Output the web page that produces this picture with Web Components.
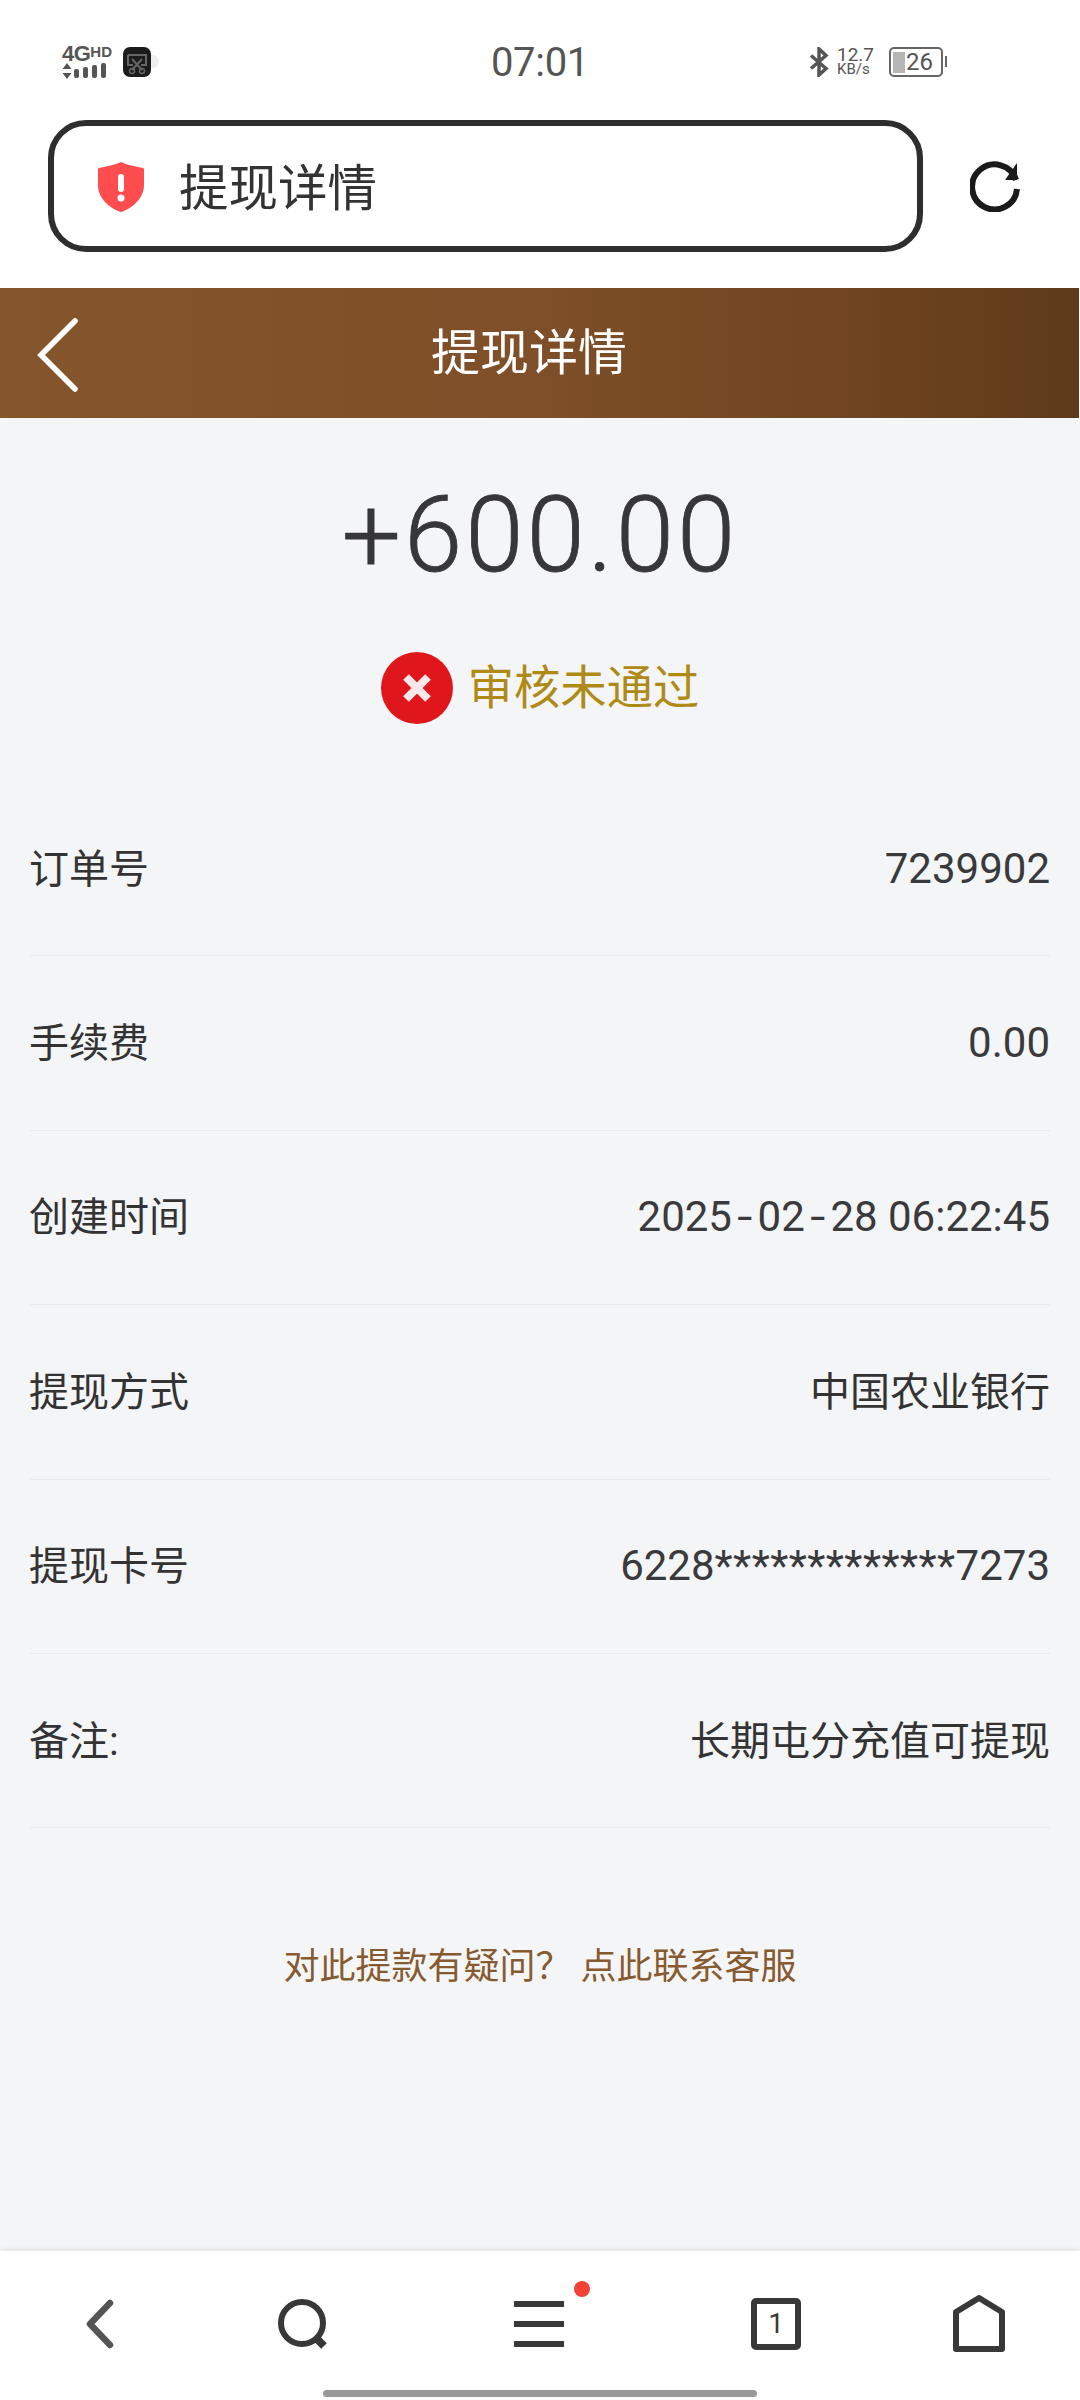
<!DOCTYPE html>
<html lang="zh">
<head>
<meta charset="utf-8">
<title>提现详情</title>
<style>
  html, body { margin: 0; padding: 0; }
  body {
    width: 1080px;
    height: 2400px;
    display: flex;
    flex-direction: column;
    overflow: hidden;
    background: #fff;
    font-family: Roboto, "Noto Sans CJK SC", sans-serif;
  }
  detail-page { flex: 1; }
</style>
</head>
<body>
  <status-bar></status-bar>
  <address-bar title="提现详情"></address-bar>
  <page-header title="提现详情"></page-header>
  <detail-page>
    <amount-summary amount="+600.00" status="审核未通过"></amount-summary>
    <detail-row label="订单号" value="7239902"></detail-row>
    <detail-row label="手续费" value="0.00"></detail-row>
    <detail-row label="创建时间" value="2025-02-28 06:22:45"></detail-row>
    <detail-row label="提现方式" value="中国农业银行"></detail-row>
    <detail-row label="提现卡号" value="6228*************7273"></detail-row>
    <detail-row label="备注:" value="长期屯分充值可提现"></detail-row>
    <contact-link>对此提款有疑问？ 点此联系客服</contact-link>
  </detail-page>
  <bottom-nav></bottom-nav>

<script>
// Status bar
class StatusBar extends HTMLElement {
  constructor() {
    super();
    this.attachShadow({ mode: 'open' });
  }

  connectedCallback() {
    this.shadowRoot.innerHTML = `
      <style>
        :host { display: grid; grid-template-columns: 1fr auto 1fr; align-items: center; height: 120px; padding: 4px 62px 0 62px; box-sizing: border-box; color: #555; background: #fff; }
        .left { display: flex; align-items: center; gap: 13px; }
        .signal { display: flex; flex-direction: column; width: 48px; gap: 1px; }
        .net { display: flex; align-items: flex-start; height: 17px; font: 700 22px/17px "Liberation Sans", sans-serif; letter-spacing: -0.5px; }
        .net small { font-size: 15px; line-height: 13px; letter-spacing: 0; }
        .app { position: relative; width: 28px; height: 30px; }
        .app::after { content: ""; position: absolute; left: 22px; top: 8px; width: 14px; height: 13px; border-radius: 50%; background: #eee; z-index: 0; }
        .app svg { position: relative; z-index: 1; display: block; }
        .time { font-size: 40px; line-height: 44px; letter-spacing: -0.3px; margin-top: 2px; }
        .right { display: flex; align-items: center; justify-content: flex-end; gap: 8px; padding-right: 75px; }
        .speed { display: flex; flex-direction: column; width: 36px; margin-right: 8px; font-size: 19px; line-height: 15px; }
        .speed small { font-size: 15px; white-space: nowrap; }
        .battery { display: flex; align-items: center; position: relative; width: 54px; height: 30px; box-sizing: border-box; border: 2.5px solid #666; border-radius: 5px; padding: 2px; font-size: 24px; color: #555; }
        .battery i { width: 12px; height: 21px; background: #b5b5b5; margin-right: 1px; }
        .battery::after { content: ""; position: absolute; right: -6px; top: 7px; width: 2px; height: 11px; background: #666; }
      </style>
      <div class="left">
        <div class="signal">
          <div class="net">4G<small>HD</small></div>
          <svg width="46" height="16" viewBox="0 0 46 16" fill="#555">
            <path d="M5 0l4.500 6h-9zM5 16l4.500-6h-9z"/>
            <rect x="12" y="6" width="5" height="9" rx="2"/>
            <rect x="21" y="4" width="5" height="11" rx="2"/>
            <rect x="30" y="2" width="5" height="13" rx="2"/>
            <rect x="39" y="0" width="5" height="15" rx="2"/>
          </svg>
        </div>
        <div class="app">
          <svg width="28" height="30" viewBox="0 0 28 30">
            <rect width="28" height="30" rx="7" fill="#1c1c1c"/>
            <path d="M5 8h18v10h-5M5 8v10h5" fill="none" stroke="#666" stroke-width="2"/>
            <path d="M9 12l10 11M19 12L9 23" fill="none" stroke="#666" stroke-width="2"/>
            <circle cx="9" cy="24" r="2.500" fill="none" stroke="#666" stroke-width="1.500"/>
            <circle cx="19" cy="24" r="2.500" fill="none" stroke="#666" stroke-width="1.500"/>
          </svg>
        </div>
      </div>
      <div class="time">07:01</div>
      <div class="right">
        <svg width="20" height="30" viewBox="0 0 20 30" fill="none" stroke="#555" stroke-width="3.500">
          <path d="M2 8.500l15 13L10 28V2l7 6.500-15 13"/>
        </svg>
        <div class="speed"><span>12.7</span><small>KB/s</small></div>
        <div class="battery"><i></i>26</div>
      </div>
    `;
  }
}
customElements.define('status-bar', StatusBar);

// Browser address bar
class AddressBar extends HTMLElement {
  constructor() {
    super();
    this.attachShadow({ mode: 'open' });
  }

  connectedCallback() {
    const title = this.getAttribute('title');
    this.removeAttribute('title');
    this.shadowRoot.innerHTML = `
      <style>
        :host { display: flex; align-items: center; gap: 47px; height: 168px; padding: 0 0 36px 48px; box-sizing: border-box; background: #fff; }
        .field { display: flex; align-items: center; gap: 35px; width: 875px; height: 132px; box-sizing: border-box; padding: 2px 0 0 44px; border: 6px solid #2e2e2e; border-radius: 38px; }
        .text { font-size: 49.500px; line-height: 60px; margin-top: 3px; color: #333; }
        svg { display: block; }
      </style>
      <div class="field">
        <svg width="46" height="50" viewBox="0 0 46 50">
          <path d="M23 0c6 3 14 4 22 6 1 0 1 1 1 2v15c0 13-11 23-23 27C11 46 0 36 0 23V8c0-1 0-2 1-2 8-2 16-3 22-6z" fill="#ff4d4f"/>
          <rect x="20" y="12" width="6" height="18" rx="3" fill="#fff"/>
          <circle cx="23" cy="36" r="3.500" fill="#fff"/>
        </svg>
        <div class="text">${title}</div>
      </div>
      <svg width="50" height="52" viewBox="0 0 50 52" fill="none">
        <path d="M46 20A22.500 22.500 0 1 0 47 29" stroke="#1a1a1a" stroke-width="6"/>
        <path d="M47 3v17H35" fill="#1a1a1a"/>
      </svg>
    `;
  }
}
customElements.define('address-bar', AddressBar);

// Brown page header
class PageHeader extends HTMLElement {
  constructor() {
    super();
    this.attachShadow({ mode: 'open' });
  }

  connectedCallback() {
    const title = this.getAttribute('title');
    this.removeAttribute('title');
    this.shadowRoot.innerHTML = `
      <style>
        :host { display: flex; align-items: center; position: relative; justify-content: center; height: 130px; width: 1079px; padding-right: 21px; box-sizing: border-box; background: linear-gradient(90deg, #85562c 0%, #7e4f28 50%, #6f4420 80%, #5e3a1a 100%); }
        svg { position: absolute; left: 36px; top: 30px; }
        .title { font-size: 49px; line-height: 60px; margin-top: 2px; color: #fff; }
      </style>
      <svg width="44" height="74" viewBox="0 0 44 74" fill="none">
        <path d="M39 3L5 37l34 34" stroke="#fff" stroke-width="5.500" stroke-linecap="round"/>
      </svg>
      <div class="title">${title}</div>
    `;
  }
}
customElements.define('page-header', PageHeader);

// Grey page body
class DetailPage extends HTMLElement {
  constructor() {
    super();
    this.attachShadow({ mode: 'open' });
  }

  connectedCallback() {
    this.shadowRoot.innerHTML = `
      <style>
        :host { display: block; background: #f4f5f7; }
      </style>
      <slot></slot>
    `;
  }
}
customElements.define('detail-page', DetailPage);

// Amount and review status
class AmountSummary extends HTMLElement {
  constructor() {
    super();
    this.attachShadow({ mode: 'open' });
  }

  connectedCallback() {
    const amount = this.getAttribute('amount');
    const status = this.getAttribute('status');
    this.shadowRoot.innerHTML = `
      <style>
        :host { display: flex; flex-direction: column; align-items: center; height: 364px; box-sizing: border-box; padding-top: 57px; }
        .amount { font-size: 105px; line-height: 122px; color: #37373a; font-weight: 300; letter-spacing: 3px; -webkit-text-stroke: 0.8px #37373a; }
        .status { display: flex; align-items: center; gap: 15px; margin-top: 55px; }
        .text { font-size: 46.300px; line-height: 60px; color: #af8a14; }
        svg { display: block; }
      </style>
      <div class="amount">${amount}</div>
      <div class="status">
        <svg width="72" height="72" viewBox="0 0 72 72">
          <circle cx="36" cy="36" r="36" fill="#e0161d"/>
          <path d="M25 25l22 22M47 25L25 47" stroke="#fbe9e9" stroke-width="8"/>
        </svg>
        <div class="text">${status}</div>
      </div>
    `;
  }
}
customElements.define('amount-summary', AmountSummary);

// One label / value row
class DetailRow extends HTMLElement {
  constructor() {
    super();
    this.attachShadow({ mode: 'open' });
  }

  connectedCallback() {
    const value = this.getAttribute('value');
    const numeric = !/[\u4e00-\u9fff]/.test(value);
    // the reference font has wide hyphens and asterisks
    const text = value
      .replace(/-/g, '<span class="dash">-</span>')
      .replace(/\*+/g, '<span class="mask">$&</span>');
    this.shadowRoot.innerHTML = `
      <style>
        :host { display: flex; align-items: center; justify-content: space-between; height: 174.400px; box-sizing: border-box; margin: 0 30px; padding-bottom: 7px; border-bottom: 1px solid #e9eaed; font-size: 40px; color: #333; }
        .label { margin-top: 1px; }
        .name { margin-left: -1px; }
        .num { font-size: 42px; color: #3a3a3c; margin-top: 6px; }
        .dash { display: inline-block; margin: 0 7px; transform: scaleX(1.3); }
        .mask { letter-spacing: 0.450px; }
      </style>
      <span class="label name">${this.getAttribute('label')}</span>
      <span class="${numeric ? 'num' : 'label'}">${text}</span>
    `;
  }
}
customElements.define('detail-row', DetailRow);

// Customer service link
class ContactLink extends HTMLElement {
  constructor() {
    super();
    this.attachShadow({ mode: 'open' });
  }

  connectedCallback() {
    this.shadowRoot.innerHTML = `
      <style>
        :host { display: block; padding-top: 114px; text-align: center; font-size: 36px; line-height: 50px; color: #875a30; }
      </style>
      <slot></slot>
    `;
  }
}
customElements.define('contact-link', ContactLink);

// Browser bottom toolbar
class BottomNav extends HTMLElement {
  constructor() {
    super();
    this.attachShadow({ mode: 'open' });
  }

  connectedCallback() {
    this.shadowRoot.innerHTML = `
      <style>
        :host { display: flex; flex-direction: column; height: 149px; box-sizing: border-box; background: #fff; box-shadow: 0 -2px 6px rgba(0,0,0,.08); position: relative; }
        .icons { display: grid; grid-template-columns: 200px 208px 264px 208px 198px; align-items: center; justify-items: center; height: 139px; padding-top: 6px; box-sizing: border-box; }
        .menu { position: relative; margin-left: -2px; }
        .dot { position: absolute; left: 60px; top: -20px; width: 16px; height: 16px; border-radius: 50%; background: #f44336; }
        .tab { display: flex; align-items: center; justify-content: center; width: 50px; height: 52px; box-sizing: border-box; border: 6px solid #383838; border-radius: 5px; font-size: 28px; color: #383838; }
        .handle { width: 434px; height: 7px; margin: 0 auto; border-radius: 4px; background: #999; }
        svg { display: block; }
      </style>
      <div class="icons">
        <svg width="32" height="52" viewBox="0 0 32 52" fill="none">
          <path d="M26 5L6 26l20 21" stroke="#555" stroke-width="6.500" stroke-linecap="round" stroke-linejoin="round"/>
        </svg>
        <svg width="54" height="54" viewBox="0 0 54 54" fill="none" stroke="#383838">
          <circle cx="25" cy="26" r="21" stroke-width="6"/>
          <path d="M38 40l9 9" stroke-width="8"/>
        </svg>
        <div class="menu">
          <svg width="50" height="46" viewBox="0 0 50 46" fill="#383838">
            <rect y="0" width="50" height="6"/>
            <rect y="20" width="50" height="6"/>
            <rect y="40" width="50" height="6"/>
          </svg>
          <div class="dot"></div>
        </div>
        <div class="tab">1</div>
        <svg width="52" height="58" viewBox="0 0 52 58" fill="none">
          <path d="M26 3L49 17v37H3V17z" stroke="#383838" stroke-width="6" stroke-linejoin="round"/>
        </svg>
      </div>
      <div class="handle"></div>
    `;
  }
}
customElements.define('bottom-nav', BottomNav);
</script>
</body>
</html>
